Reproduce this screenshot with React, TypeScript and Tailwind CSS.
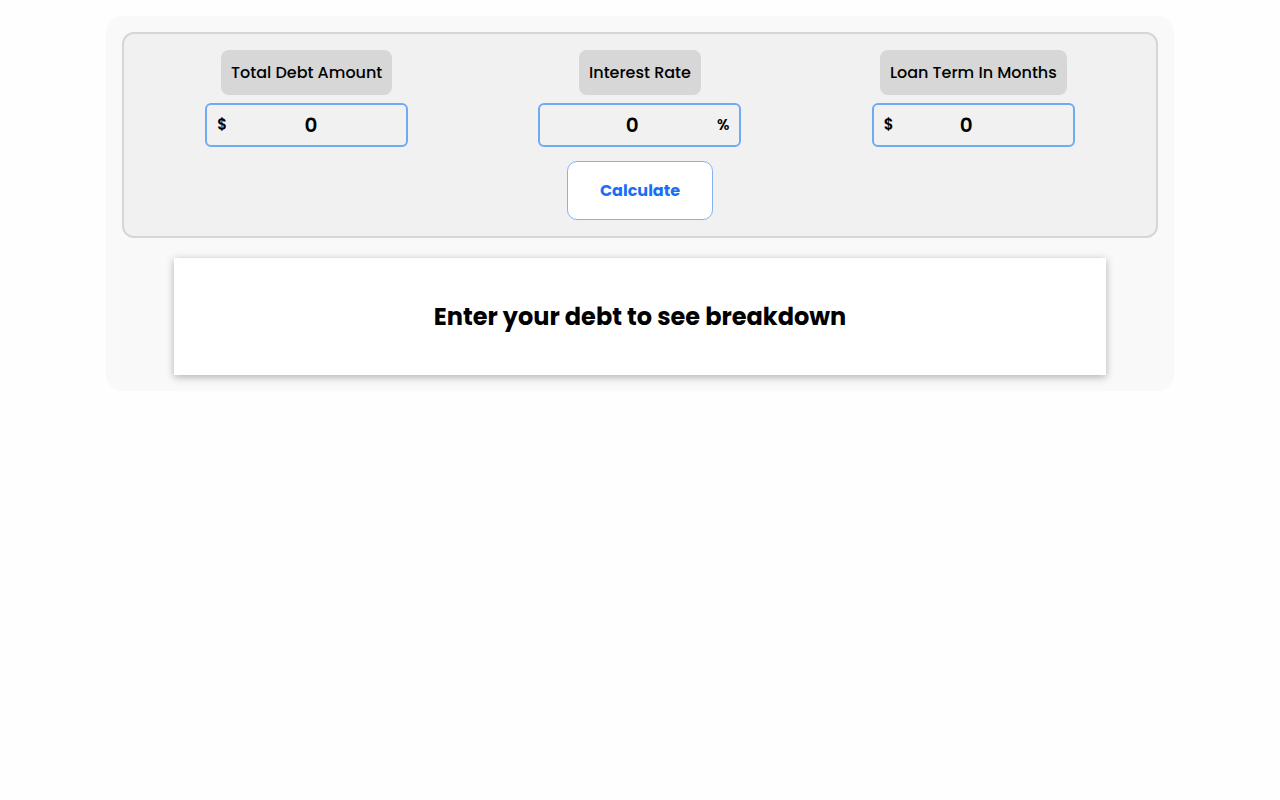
import * as React from "react"

const font = { fontFamily: "Poppins, 'DejaVu Sans', sans-serif" }

function Field({
  label,
  prefix,
  suffix,
  inputClass,
}: {
  label: string
  prefix?: string
  suffix?: string
  inputClass?: string
}) {
  const [value, setValue] = React.useState("0")
  return (
    <div className="flex flex-col items-center gap-2">
      <div className="rounded-lg bg-[#d7d7d7] px-2.5 py-2.5 text-base leading-[25px] font-medium text-black">
        {label}
      </div>
      <div className="flex h-[44px] w-[203px] items-center rounded-md border-2 border-[#70a9f6] px-2.5">
        {prefix && <span className="text-[15px] font-semibold text-black">{prefix}</span>}
        <input
          value={value}
          onChange={(e) => setValue(e.target.value)}
          className={`min-w-0 flex-1 bg-transparent text-center text-xl font-semibold text-black outline-none ${inputClass ?? ""}`}
          style={font}
        />
        {suffix && <span className="text-[15px] font-semibold text-black">{suffix}</span>}
      </div>
    </div>
  )
}

export default function App() {
  return (
    <div className="min-h-screen bg-[#fefefe] pt-4" style={font}>
      <div className="mx-auto w-[1068px] rounded-2xl bg-[#f9f9f9] p-4">
        <div className="rounded-xl border-2 border-[#d6d6d6] bg-[#f1f1f1] p-4">
          <div className="grid grid-cols-3">
            <Field label="Total Debt Amount" prefix="$" inputClass="pr-[1px]" />
            <Field label="Interest Rate" suffix="%" inputClass="pr-[3px]" />
            <Field label="Loan Term In Months" prefix="$" inputClass="pr-[24px]" />
          </div>
          <div className="mt-[14px] flex justify-center">
            <button className="h-[59px] w-[146px] rounded-[10px] border border-[#80b2f6] bg-white text-base font-bold text-[#1a6ef5]">
              Calculate
            </button>
          </div>
        </div>
        <div className="mx-auto mt-5 flex h-[117px] w-[90%] items-center justify-center bg-white shadow-[0_2px_8px_rgba(0,0,0,0.3)]">
          <h2 className="text-2xl font-bold text-black">Enter your debt to see breakdown</h2>
        </div>
      </div>
    </div>
  )
}
